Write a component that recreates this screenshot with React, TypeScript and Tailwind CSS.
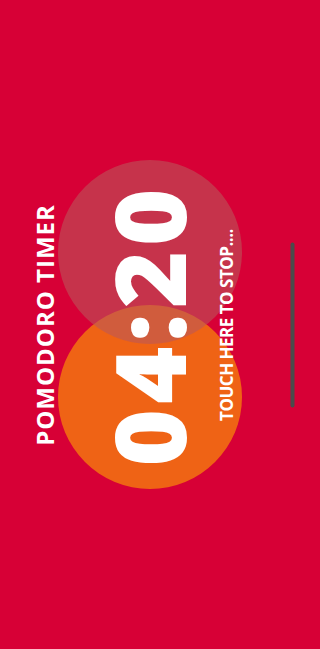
export default function App() {
  return (
    <div className="min-h-screen w-full bg-[#d70036]">
      <div className="w-[300px] h-[649px] grid grid-cols-[300px] grid-rows-[649px] place-items-center overflow-hidden font-['Open_Sans',sans-serif] text-white">
        {/* circles */}
        <div className="[grid-area:1/1] flex flex-col items-center">
          <div className="relative z-10 w-[184px] h-[184px] rounded-full bg-[rgba(186,88,91,0.58)]" />
          <div className="-mt-[39px] w-[184px] h-[184px] rounded-full bg-[#ef6315]" />
        </div>

        {/* rotated content */}
        <div className="[grid-area:1/1] relative z-20 w-[649px] h-[300px] shrink-0 -rotate-90 flex flex-col items-center">
          <div className="mt-[31px] h-[25px] leading-[25px] text-[24px] font-bold tracking-[1px]">POMODORO TIMER</div>
          <div className="mt-[41px] h-[100px] leading-[100px] text-[98px] font-extrabold tracking-[5px]">04:20</div>
          <div className="mt-[20px] h-[18px] leading-[18px] text-[17px] font-bold tracking-[-0.5px]">TOUCH HERE TO STOP....</div>
          <div className="mt-auto mb-[6px] w-[165px] h-[4px] rounded-full bg-[#4b4b4b]" />
        </div>
      </div>
    </div>
  );
}
